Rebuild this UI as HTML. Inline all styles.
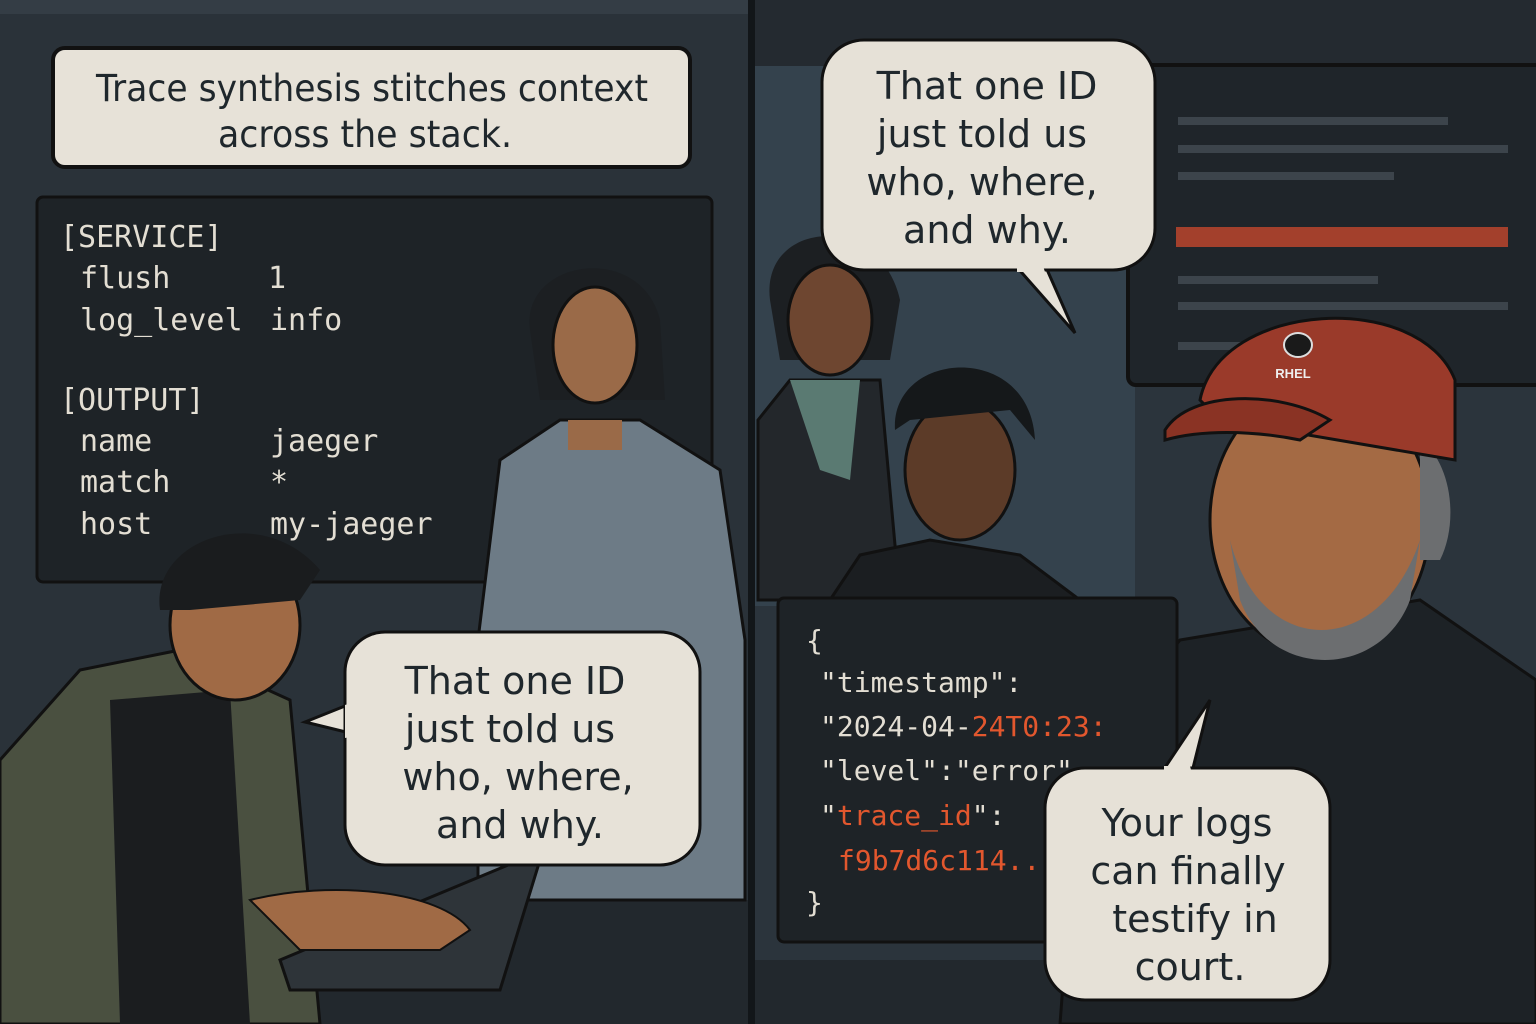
<!DOCTYPE html>
<html><head><meta charset="utf-8"><style>
html,body{margin:0;padding:0;background:#1b2024;}
svg{display:block}
.b{font-family:"DejaVu Sans","Liberation Sans",sans-serif;fill:#1f272c;text-anchor:middle}
.m{font-family:"DejaVu Sans Mono","Liberation Mono",monospace;fill:#e3ded3}
</style></head><body>
<svg width="1536" height="1024" viewBox="0 0 1536 1024" xmlns="http://www.w3.org/2000/svg">
<rect x="0" y="0" width="748" height="1024" fill="#2a3239"/>
<rect x="0" y="0" width="748" height="14" fill="#343d45"/>
<rect x="755" y="0" width="781" height="1024" fill="#2b343c"/>
<rect x="755" y="0" width="781" height="66" fill="#242a30"/>
<rect x="755" y="66" width="380" height="540" fill="#34424d"/>
<rect x="748" y="0" width="7" height="1024" fill="#121619"/>
<rect x="0" y="900" width="748" height="124" fill="#22282d"/>
<rect x="755" y="960" width="781" height="64" fill="#22282d"/>

<rect x="53" y="48" width="637" height="119" rx="12" fill="#e7e2d8" stroke="#111" stroke-width="4"/>
<text class="b" x="372" y="101" font-size="37" textLength="552" lengthAdjust="spacingAndGlyphs">Trace synthesis stitches context</text>
<text class="b" x="365" y="147" font-size="37" textLength="294" lengthAdjust="spacingAndGlyphs">across the stack.</text>

<rect x="37" y="197" width="675" height="385" rx="6" fill="#1e2327" stroke="#111" stroke-width="3"/>
<g class="m" font-size="30">
<text x="60" y="247">[SERVICE]</text>
<text x="80" y="288">flush</text><text x="268" y="288">1</text>
<text x="80" y="330">log_level</text><text x="270" y="330">info</text>
<text x="60" y="410">[OUTPUT]</text>
<text x="80" y="451">name</text><text x="270" y="451">jaeger</text>
<text x="80" y="492">match</text><text x="270" y="492">*</text>
<text x="80" y="534">host</text><text x="270" y="534">my-jaeger</text>
</g>

<path d="M478 640 L500 460 L560 420 L640 420 L720 470 L745 640 L745 900 L478 900 Z" fill="#6d7b86" stroke="#111" stroke-width="3"/>
<path d="M530 330 C520 260 640 240 660 320 L665 400 L540 400 Z" fill="#1c1f22"/>
<ellipse cx="595" cy="345" rx="42" ry="58" fill="#9a6a48" stroke="#111" stroke-width="3"/>
<rect x="568" y="420" width="54" height="30" fill="#9a6a48"/>

<path d="M0 760 L80 670 L180 650 L290 700 L320 1024 L0 1024 Z" fill="#4a5040" stroke="#111" stroke-width="3"/>
<path d="M110 700 L230 690 L250 1024 L120 1024 Z" fill="#1b1d1f"/>
<ellipse cx="235" cy="625" rx="65" ry="75" fill="#a06a45" stroke="#111" stroke-width="3"/>
<path d="M160 610 C150 540 260 500 320 570 L300 600 L190 610 Z" fill="#1a1c1e"/>
<path d="M280 960 L520 860 L540 860 L500 990 L290 990 Z" fill="#2e3439" stroke="#111" stroke-width="3"/>
<path d="M250 900 C330 880 440 890 470 930 L440 950 L300 950 Z" fill="#a06a45" stroke="#111" stroke-width="2"/>

<path d="M360 700 L305 722 L358 735 Z" fill="#e7e2d8" stroke="#111" stroke-width="3"/>
<rect x="345" y="632" width="355" height="233" rx="40" fill="#e7e2d8" stroke="#111" stroke-width="3"/>
<path d="M345 705 L360 700 L358 735 L345 738 Z" fill="#e7e2d8"/>
<g class="b" font-size="38">
<text x="515" y="694">That one ID</text>
<text x="510" y="742">just told us</text>
<text x="518" y="790">who, where,</text>
<text x="520" y="838">and why.</text>
</g>

<rect x="1128" y="65" width="420" height="320" rx="8" fill="#1f252a" stroke="#111" stroke-width="4"/>
<rect x="1178" y="117" width="270" height="8" fill="#3c444b"/>
<rect x="1178" y="145" width="330" height="8" fill="#3c444b"/>
<rect x="1178" y="172" width="216" height="8" fill="#3c444b"/>
<rect x="1176" y="227" width="332" height="20" fill="#a3402c"/>
<rect x="1178" y="276" width="200" height="8" fill="#3c444b"/>
<rect x="1178" y="302" width="330" height="8" fill="#3c444b"/>
<rect x="1178" y="342" width="70" height="8" fill="#3c444b"/>

<path d="M758 420 L790 380 L880 380 L900 600 L758 600 Z" fill="#23272b" stroke="#111" stroke-width="3"/>
<path d="M790 380 L860 380 L850 480 L820 470 Z" fill="#5a7a72"/>
<path d="M770 300 C760 220 880 210 900 300 L890 360 L780 360 Z" fill="#1c1f22"/>
<ellipse cx="830" cy="320" rx="42" ry="55" fill="#6e4630" stroke="#111" stroke-width="3"/>
<path d="M830 600 L860 555 L930 540 L1020 555 L1080 600 Z" fill="#1b1e21" stroke="#111" stroke-width="3"/>
<ellipse cx="960" cy="470" rx="55" ry="70" fill="#5c3b28" stroke="#111" stroke-width="3"/>
<path d="M895 430 C890 350 1030 340 1035 440 L1010 410 L910 420 Z" fill="#15181a"/>

<path d="M1080 760 L1180 640 L1420 600 L1536 680 L1536 1024 L1060 1024 Z" fill="#1d2226" stroke="#111" stroke-width="3"/>
<ellipse cx="1320" cy="520" rx="110" ry="135" fill="#a46a44" stroke="#111" stroke-width="3"/>
<path d="M1230 540 C1260 660 1380 660 1420 540 L1410 600 C1380 680 1270 680 1240 600 Z" fill="#6c6e70"/>
<path d="M1420 440 C1450 460 1460 520 1440 560 L1420 560 Z" fill="#6c6e70"/>
<path d="M1200 400 C1220 300 1420 290 1455 380 L1455 460 L1220 420 Z" fill="#9a3a2a" stroke="#111" stroke-width="3"/>
<path d="M1165 430 C1190 390 1280 390 1330 420 L1300 440 C1250 430 1200 430 1165 440 Z" fill="#8a3324" stroke="#111" stroke-width="3"/>
<ellipse cx="1298" cy="345" rx="14" ry="12" fill="#1a1a1a" stroke="#ddd" stroke-width="2"/>
<text x="1293" y="378" font-family="Liberation Sans,sans-serif" font-weight="bold" font-size="13" fill="#eee" text-anchor="middle">RHEL</text>

<path d="M1015 265 L1075 333 L1045 265 Z" fill="#e6e1d7" stroke="#111" stroke-width="3"/>
<rect x="822" y="40" width="333" height="230" rx="42" fill="#e6e1d7" stroke="#111" stroke-width="3"/>
<path d="M1017 266 L1043 266 L1045 272 L1017 272 Z" fill="#e6e1d7"/>
<g class="b" font-size="38">
<text x="987" y="99">That one ID</text>
<text x="982" y="147">just told us</text>
<text x="982" y="195">who, where,</text>
<text x="987" y="243">and why.</text>
</g>

<rect x="778" y="598" width="399" height="344" rx="6" fill="#1e2327" stroke="#111" stroke-width="3"/>
<g class="m" font-size="28">
<text x="806" y="650">{</text>
<text x="820" y="692">"timestamp":</text>
<text x="820" y="736">"2024-04-<tspan fill="#e2572e">24T0:23:</tspan></text>
<text x="820" y="780">"level":"error"</text>
<text x="820" y="825"><tspan>"</tspan><tspan fill="#e2572e">trace_id</tspan>":</text>
<text x="838" y="870" fill="#e2572e">f9b7d6c114...</text>
<text x="806" y="912">}</text>
</g>

<path d="M1162 772 L1210 700 L1192 772 Z" fill="#e6e1d7" stroke="#111" stroke-width="3"/>
<rect x="1045" y="768" width="285" height="232" rx="40" fill="#e6e1d7" stroke="#111" stroke-width="3"/>
<path d="M1164 766 L1190 766 L1192 774 L1164 774 Z" fill="#e6e1d7"/>
<g class="b" font-size="38">
<text x="1187" y="836">Your logs</text>
<text x="1188" y="884">can finally</text>
<text x="1195" y="932">testify in</text>
<text x="1190" y="980">court.</text>
</g>
</svg>
</body></html>
